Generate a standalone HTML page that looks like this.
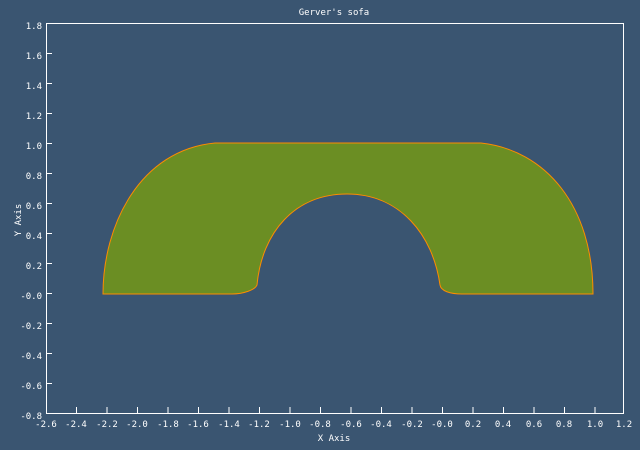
<!DOCTYPE html>
<html><head><style>
html,body{margin:0;padding:0;background:#3a5571;}
svg{display:block}
text{font-family:"DejaVu Sans Mono","Liberation Mono",monospace;font-size:9px;fill:#fff}
</style></head><body>
<svg width="640" height="450" viewBox="0 0 640 450">
<rect width="640" height="450" fill="#3a5571"/>
<path d="M103,294 C103,225 140,150 215,143 L481,143 C545,150 593,205 593,294 L462,294 C450,294 441,291 440,285 C433,235 400,194 347,194 C295,194 262,232 257,285 C255,290 243,294 232,294 Z" fill="#6b8e23" stroke="#ff8c00" stroke-width="1"/>
<rect x="46.5" y="23.5" width="577" height="390" fill="none" stroke="#fff" stroke-width="1"/>
<g stroke="#fff" stroke-width="1">
<path d="M76.5,413V407M107,413V407M137.5,413V407M168,413V407M198.5,413V407M229,413V407M259.5,413V407M290,413V407M320.5,413V407M351,413V407M381.5,413V407M412,413V407M442.5,413V407M473,413V407M503.5,413V407M534,413V407M564.5,413V407M595,413V407"/>
<path d="M46,53.5H52M46,83.5H52M46,113.5H52M46,143.5H52M46,173.5H52M46,203.5H52M46,233.5H52M46,263.5H52M46,293.5H52M46,323.5H52M46,353.5H52M46,383.5H52"/>
</g>
<g text-anchor="end">
<text x="42" y="29">1.8</text><text x="42" y="59">1.6</text><text x="42" y="89">1.4</text><text x="42" y="119">1.2</text><text x="42" y="149">1.0</text><text x="42" y="179">0.8</text><text x="42" y="209">0.6</text><text x="42" y="239">0.4</text><text x="42" y="269">0.2</text><text x="42" y="299">-0.0</text><text x="42" y="329">-0.2</text><text x="42" y="359">-0.4</text><text x="42" y="389">-0.6</text><text x="42" y="419">-0.8</text>
</g>
<g text-anchor="middle">
<text x="46" y="427">-2.6</text><text x="76" y="427">-2.4</text><text x="107" y="427">-2.2</text><text x="137" y="427">-2.0</text><text x="168" y="427">-1.8</text><text x="198" y="427">-1.6</text><text x="229" y="427">-1.4</text><text x="259" y="427">-1.2</text><text x="290" y="427">-1.0</text><text x="320" y="427">-0.8</text><text x="351" y="427">-0.6</text><text x="381" y="427">-0.4</text><text x="412" y="427">-0.2</text><text x="442" y="427">-0.0</text><text x="473" y="427">0.2</text><text x="503" y="427">0.4</text><text x="534" y="427">0.6</text><text x="564" y="427">0.8</text><text x="595" y="427">1.0</text><text x="624" y="427">1.2</text>
<text x="334" y="15">Gerver's sofa</text>
<text x="334" y="441">X Axis</text>
<text x="0" y="0" transform="translate(21,220) rotate(-90)">Y Axis</text>
</g>
</svg>
</body></html>
